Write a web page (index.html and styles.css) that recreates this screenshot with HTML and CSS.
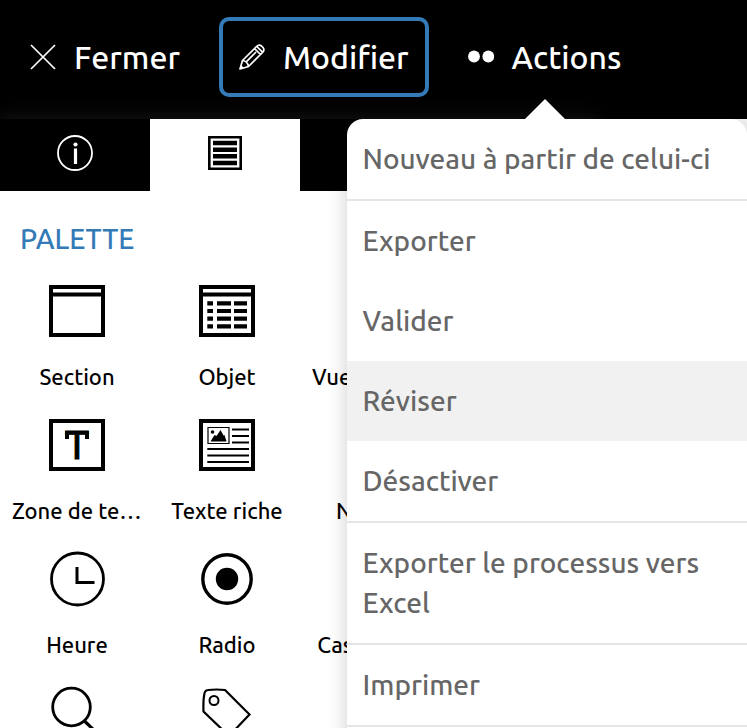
FILE: index.html
```html
<!DOCTYPE html>
<html lang="fr">
<head>
<meta charset="utf-8">
<meta name="viewport" content="width=device-width, initial-scale=1">
<title>Palette</title>
<link rel="stylesheet" href="styles.css">
</head>
<body>
<header class="topbar">
  <button class="action" type="button">
    <svg class="action-icon" viewBox="0 0 26 26" aria-hidden="true"><path d="M1 1L25 25M25 1L1 25" fill="none" stroke="currentColor" stroke-width="1.7"/></svg>
    Fermer
  </button>
  <button class="action action-active" type="button">
    <svg class="action-icon" viewBox="0 0 26 26" aria-hidden="true"><g fill="none" stroke="currentColor" stroke-width="1.7" stroke-linejoin="round"><path d="M1 25L3.500 16.500L17.500 2.500Q20 0 22.500 2L24 3.500Q26 6 23.500 8.500L9.500 22.500ZM3.500 16.500Q8.500 17 9.500 22.500M6.700 18.300L17 8M15.500 4.500L21.500 10.500M17.800 2.500L23.500 8.200"/></g><path d="M1 25L2.200 21.200L4.800 23.800Z" fill="currentColor"/></svg>
    Modifier
  </button>
  <div class="action-group">
    <button class="action" type="button" aria-expanded="true" aria-haspopup="menu">
      <svg class="action-icon" viewBox="0 0 26 26" aria-hidden="true"><circle cx="6" cy="12.500" r="5.900" fill="currentColor"/><circle cx="20.300" cy="12.500" r="5.900" fill="currentColor"/></svg>
      Actions
    </button>
    <div class="menu" role="menu">
      <button class="menu-item" role="menuitem" type="button">Nouveau à partir de celui-ci</button>
      <hr class="menu-divider">
      <button class="menu-item" role="menuitem" type="button">Exporter</button>
      <button class="menu-item" role="menuitem" type="button">Valider</button>
      <button class="menu-item menu-item-current" role="menuitem" type="button">Réviser</button>
      <button class="menu-item" role="menuitem" type="button">Désactiver</button>
      <hr class="menu-divider">
      <button class="menu-item" role="menuitem" type="button">Exporter le processus vers Excel</button>
      <hr class="menu-divider">
      <button class="menu-item" role="menuitem" type="button">Imprimer</button>
      <hr class="menu-divider">
    </div>
  </div>
</header>
<main class="panel">
  <nav class="tabs">
    <button class="tab" type="button" aria-label="Informations">
      <svg class="tab-icon" viewBox="0 0 36 36" aria-hidden="true"><circle cx="18" cy="18" r="17" fill="none" stroke="currentColor" stroke-width="1.800"/><circle cx="18.500" cy="9.500" r="2.100" fill="currentColor"/><path d="M18.500 13.500V29" stroke="currentColor" stroke-width="3.200"/></svg>
    </button>
    <button class="tab tab-active" type="button" aria-label="Palette">
      <svg class="tab-icon" viewBox="0 0 36 36" aria-hidden="true"><path d="M2.300 2.300H33.700V33.700H2.300Z" fill="none" stroke="currentColor" stroke-width="2.600"/><path d="M6 8H30M6 14.700H30M6 21.300H30M6 28H30" stroke="currentColor" stroke-width="4.400"/></svg>
    </button>
    <button class="tab" type="button" aria-label="Options"></button>
    <button class="tab" type="button" aria-label="Historique"></button>
  </nav>
  <h2 class="title">PALETTE</h2>
  <ul class="palette">
    <li class="tool">
      <svg class="tool-icon" viewBox="0 0 56 56" aria-hidden="true"><path d="M2 4H54V52H2ZM2 11.500H54" fill="none" stroke="currentColor" stroke-width="4"/></svg>
      <span class="tool-label">Section</span>
    </li>
    <li class="tool">
      <svg class="tool-icon" viewBox="0 0 56 56" aria-hidden="true"><path d="M2 4H54V52H2ZM2 11.500H54" fill="none" stroke="currentColor" stroke-width="4"/><path d="M8.300 20.300H14M18 20.300H32M35 20.300H48M8.300 28H14M18 28H32M35 28H48M8.300 35.700H14M18 35.700H32M35 35.700H48M8.300 43.400H14M18 43.400H32M35 43.400H48" stroke="currentColor" stroke-width="4.200"/></svg>
      <span class="tool-label">Objet</span>
    </li>
    <li class="tool"><span class="tool-icon"></span><span class="tool-label">Vue intégrée</span></li>
    <li class="tool"></li>
    <li class="tool">
      <svg class="tool-icon" viewBox="0 0 56 56" aria-hidden="true"><path d="M2 4H54V52H2Z" fill="none" stroke="currentColor" stroke-width="4"/><text class="letter" x="28" y="42" text-anchor="middle">T</text><path d="M16 14H20V22H16ZM36 14H40V22H36Z" fill="currentColor"/></svg>
      <span class="tool-label">Zone de texte</span>
    </li>
    <li class="tool">
      <svg class="tool-icon" viewBox="0 0 56 56" aria-hidden="true"><path d="M2 4H54V52H2Z" fill="none" stroke="currentColor" stroke-width="4"/><path d="M9 10.500H30V26.500H9Z" fill="none" stroke="currentColor" stroke-width="1.200"/><circle cx="13.500" cy="15" r="1.800" fill="currentColor"/><path d="M11.500 24.500L15.500 18L17.500 19L21.500 13L24.500 18.500L25.500 18L27.500 24.500Z" fill="currentColor"/><path d="M33 12.500H50M33 19H50M33 25.500H50M8.300 32H50M8.300 38.500H50M8.300 45H50" stroke="currentColor" stroke-width="1.900"/></svg>
      <span class="tool-label">Texte riche</span>
    </li>
    <li class="tool"><span class="tool-icon"></span><span class="tool-label">Nombre</span></li>
    <li class="tool"></li>
    <li class="tool">
      <svg class="tool-icon" viewBox="0 0 56 56" aria-hidden="true"><circle cx="28.500" cy="28" r="26" fill="none" stroke="currentColor" stroke-width="2.800"/><path d="M28 16V31.500H45.500" fill="none" stroke="currentColor" stroke-width="3"/></svg>
      <span class="tool-label">Heure</span>
    </li>
    <li class="tool">
      <svg class="tool-icon" viewBox="0 0 56 56" aria-hidden="true"><circle cx="28" cy="28" r="24.200" fill="none" stroke="currentColor" stroke-width="3.400"/><circle cx="28" cy="28" r="11.200" fill="currentColor"/></svg>
      <span class="tool-label">Radio</span>
    </li>
    <li class="tool"><span class="tool-icon"></span><span class="tool-label">Case option</span></li>
    <li class="tool"></li>
    <li class="tool">
      <svg class="tool-icon" viewBox="0 0 56 56" aria-hidden="true"><circle cx="22.500" cy="22" r="18.800" fill="none" stroke="currentColor" stroke-width="2.800"/><path d="M35.500 36L53 53" stroke="currentColor" stroke-width="3.200"/></svg>
    </li>
    <li class="tool">
      <svg class="tool-icon" viewBox="0 0 56 56" aria-hidden="true"><path d="M4.500 26.500Q4 14 5.700 7.500Q6.500 5.200 9 5Q17.500 4 26 5L50.500 29.500L30 51Z" fill="none" stroke="currentColor" stroke-width="2.200"/><circle cx="15" cy="15.500" r="4.500" fill="none" stroke="currentColor" stroke-width="2"/></svg>
    </li>
  </ul>
</main>
</body>
</html>
```
FILE: styles.css
```css
* {
  box-sizing: border-box;
}

body {
  display: flex;
  flex-direction: column;
  height: 100vh;
  margin: 0;
  overflow: hidden;
  background: #f1f1f1;
  color: #000;
  font-family: Ubuntu, "Noto Sans", sans-serif;
}

button {
  border: 0;
  font-family: inherit;
  cursor: pointer;
}

svg {
  display: block;
}

.topbar {
  display: flex;
  flex: none;
  gap: 19px;
  padding: 17px 10px 22px;
  background: #000;
}

.action {
  display: flex;
  align-items: center;
  gap: 18px;
  height: 80px;
  padding: 0 16px;
  border: 4px solid transparent;
  border-radius: 10px;
  background: none;
  color: #fff;
  font-size: 32px;
  font-weight: 500;
  line-height: 40px;
}

.action-active {
  border-color: #337ab7;
}

.action-icon {
  flex: none;
  width: 26px;
  height: 26px;
}

.action-group {
  position: relative;
  z-index: 2;
}

.menu {
  position: absolute;
  top: calc(100% + 22px);
  left: 50%;
  width: 400px;
  min-height: 640px;
  margin-left: -198px;
  border-radius: 16px;
  background: #fff;
  box-shadow: 0 8px 20px rgba(0, 0, 0, 0.2);
}

.menu::before {
  content: "";
  position: absolute;
  bottom: 100%;
  left: 178px;
  border: 20px solid transparent;
  border-top: 0;
  border-bottom-color: #fff;
}

.menu-item {
  display: block;
  width: 100%;
  padding: 20px 16px;
  background: none;
  color: #666;
  font-size: 28px;
  font-weight: 500;
  line-height: 40px;
  text-align: left;
}

.menu-item-current {
  background: #f1f1f1;
}

.menu-divider {
  height: 2px;
  margin: 0;
  border: 0;
  background: #e5e5e5;
}

.panel {
  flex: 1;
  width: 100%;
  max-width: 600px;
  background: #fff;
  box-shadow: 0 0 20px rgba(128, 128, 128, 0.2);
}

.tabs {
  display: grid;
  grid-template-columns: repeat(4, 1fr);
  background: #000;
}

.tab {
  display: grid;
  place-items: center;
  height: 72px;
  padding: 0 0 4px;
  background: #000;
  color: #fff;
}

.tab-active {
  background: #fff;
  color: #000;
}

.tab-icon {
  width: 36px;
  height: 36px;
}

.title {
  margin: 28px 20px 24px;
  color: #337ab7;
  font-size: 28px;
  font-weight: 500;
  line-height: 40px;
}

.palette {
  display: grid;
  grid-template-columns: repeat(4, 1fr);
  row-gap: 24px;
  margin: 0 -2px 0 2px;
  padding: 0;
  list-style: none;
}

.tool {
  display: flex;
  flex-direction: column;
  align-items: center;
  gap: 22px;
  min-width: 0;
  padding: 0 10px;
}

.tool-icon {
  flex: none;
  width: 56px;
  height: 56px;
}

.tool-label {
  max-width: 100%;
  overflow: hidden;
  font-size: 22px;
  font-weight: 500;
  line-height: 32px;
  text-overflow: ellipsis;
  white-space: nowrap;
}

.letter {
  fill: currentColor;
  stroke: currentColor;
  stroke-width: 1px;
  font-family: "Liberation Sans", sans-serif;
  font-size: 40px;
}
```
